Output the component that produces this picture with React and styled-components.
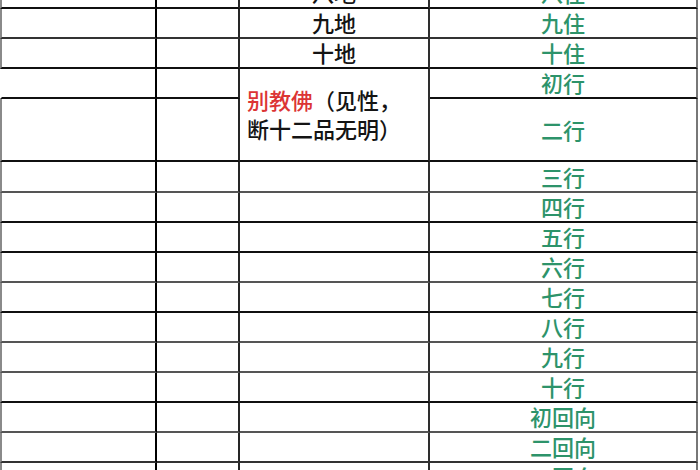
import styled, { createGlobalStyle } from 'styled-components';

const GlobalStyle = createGlobalStyle`
    html, body {
        margin: 0;
        padding: 0;
        background: #fff;
    }
    body {
        font-family: "Noto Sans CJK SC", "Noto Sans", sans-serif;
    }
`;

const tones = {
    dark: '#101010',
    mid: '#333333',
    light: '#555555',
};

const colTones = ['#000000', '#262626', '#2e2e2e', '#777777'];

const Sheet = styled.div`
    width: 700px;
    height: 470px;
    overflow: hidden;
    background: #fff;
`;

const Table = styled.table`
    border-collapse: separate;
    border-spacing: 0;
    table-layout: fixed;
    width: 698px;
    margin-top: -21px;
    font-size: 22px;
    font-weight: 500;
    color: #141414;
`;

const Cell = styled.td`
    box-sizing: border-box;
    padding: 0 0 2px;
    height: ${props => props.h}px;
    border-bottom: 2px solid ${props => tones[props.line]};
    border-right: 2px solid ${props => colTones[props.col]};
    border-left: ${props =>
        props.col === 0 ? (props.noLeft ? '2px solid #fff' : '2px solid #8a8a8a') : 'none'};
    text-align: center;
    vertical-align: middle;
    line-height: 26px;
    white-space: nowrap;
`;

const Stage = styled(Cell)`
    color: #2d936a;
`;

const NoteCell = styled(Cell)`
    text-align: left;
    padding: 0 0 2px 7px;
    line-height: 29px;
`;

const Red = styled.span`
    color: #dc3434;
`;

const rows = [
    { h: 30, line: 'dark', ground: '八地', stage: '八住' },
    { h: 29, line: 'mid', ground: '九地', stage: '九住' },
    { h: 30, line: 'dark', ground: '十地', stage: '十住' },
    { h: 30, line: 'dark', note: true, noLeft: true, stage: '初行' },
    { h: 63, line: 'dark', merged: true, stage: '二行' },
    { h: 31, line: 'light', stage: '三行' },
    { h: 30, line: 'dark', stage: '四行' },
    { h: 30, line: 'dark', stage: '五行' },
    { h: 30, line: 'light', stage: '六行' },
    { h: 30, line: 'dark', stage: '七行' },
    { h: 30, line: 'light', stage: '八行' },
    { h: 30, line: 'light', stage: '九行' },
    { h: 30, line: 'dark', stage: '十行' },
    { h: 30, line: 'light', stage: '初回向' },
    { h: 30, line: 'mid', stage: '二回向' },
    { h: 30, line: 'mid', stage: '三回向' },
];

function App() {
    return (
        <Sheet>
            <GlobalStyle />
            <Table>
                <colgroup>
                    <col style={{ width: 157 }} />
                    <col style={{ width: 83 }} />
                    <col style={{ width: 190 }} />
                    <col style={{ width: 268 }} />
                </colgroup>
                <tbody>
                    {rows.map((row, i) => (
                        <tr key={i}>
                            <Cell col={0} h={row.h} line={row.line} noLeft={row.noLeft} />
                            <Cell col={1} h={row.h} line={row.line} />
                            {row.note && (
                                <NoteCell col={2} h={row.h} line="dark" rowSpan={2}>
                                    <Red>别教佛</Red>（见性，
                                    <br />
                                    断十二品无明）
                                </NoteCell>
                            )}
                            {!row.note && !row.merged && (
                                <Cell col={2} h={row.h} line={row.line}>
                                    {row.ground}
                                </Cell>
                            )}
                            <Stage col={3} h={row.h} line={row.line}>
                                {row.stage}
                            </Stage>
                        </tr>
                    ))}
                </tbody>
            </Table>
        </Sheet>
    );
}

export default App;
